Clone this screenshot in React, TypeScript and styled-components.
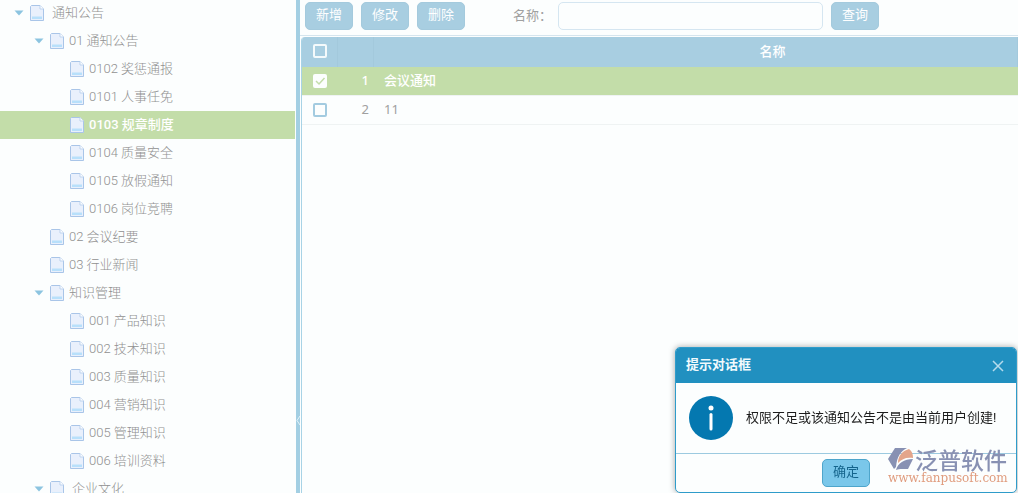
import React from "react";
import styled, { createGlobalStyle, css } from "styled-components";

const GlobalStyle = createGlobalStyle`
  * { box-sizing: border-box; }
  body {
    margin: 0;
    overflow: hidden;
    background: #fcfefe;
    color: #a0a0a0;
    font: 13px/20px Roboto, "Noto Sans CJK SC", sans-serif;
  }
  button, input { font: inherit; }
`;

const Page = styled.div`
  display: flex;
  height: 100vh;
  overflow: hidden;
`;

const Sidebar = styled.nav`
  flex: 0 0 296px;
  padding-right: 1px;
  overflow: hidden;
`;

const Tree = styled.ul`
  list-style: none;
  margin: -1px 0 0;
  padding: 0;
`;

const TreeNode = styled.button<{ $level: number; $selected?: boolean; $gap?: boolean }>`
  display: flex;
  align-items: center;
  width: 100%;
  height: 28px;
  padding: 0 0 0 ${(p) => 10 + p.$level * 20}px;
  border: 0;
  background: ${(p) => (p.$selected ? "#c3dda9" : "transparent")};
  color: ${(p) => (p.$selected ? "#ffffff" : "#909090")};
  font-weight: ${(p) => (p.$selected ? 500 : 300)};
  text-align: left;
  white-space: nowrap;

  span {
    padding: 0 0 1px ${(p) => (p.$gap ? 8 : 5)}px;
  }
`;

const Arrow = styled.svg`
  flex: none;
  width: 20px;
  height: 20px;
`;

const FileGlyph = styled.svg`
  flex: none;
  width: 14px;
  height: 16px;
`;

const Splitter = styled.div`
  position: relative;
  flex: 0 0 4px;
  background: #a3cfe3;
`;

const SplitterHandle = styled.svg`
  position: absolute;
  left: 0;
  top: 415px;
  width: 4px;
  height: 11px;
`;

const Main = styled.main`
  display: flex;
  flex-direction: column;
  flex: 1;
  min-width: 0;
`;

const Toolbar = styled.form`
  display: flex;
  flex: none;
  align-items: flex-start;
  gap: 8px;
  height: 36px;
  padding: 2px 5px 0;
  border-bottom: 1px solid #d5e5ee;
`;

const buttonShape = css`
  width: 48px;
  height: 28px;
  padding: 0 0 2px;
  border-radius: 5px;
`;

const ToolButton = styled.button`
  ${buttonShape}
  flex: none;
  border: 1px solid #a4cadd;
  background: #a8cee1;
  color: #ffffff;
`;

const FieldLabel = styled.label`
  display: flex;
  align-items: center;
  flex: 0 1 310px;
  margin-left: 40px;
  line-height: 26px;
  white-space: nowrap;
`;

const TextField = styled.input`
  flex: 1;
  min-width: 0;
  height: 28px;
  margin-left: 6px;
  padding: 0 8px;
  border: 1px solid #d5e6f1;
  border-radius: 5px;
  background: transparent;
`;

const GridFrame = styled.div`
  flex: 1;
  margin: 1px 0 0 1px;
  border-left: 1px solid #a8d3e6;
  border-top-left-radius: 4px;
  overflow: hidden;
`;

const Grid = styled.table`
  width: 100%;
  border-collapse: separate;
  border-spacing: 0;
  table-layout: fixed;
  font-family: "Noto Sans", "Noto Sans CJK SC", sans-serif;
`;

const CheckColumn = styled.col`
  width: 36px;
`;

const HeadCell = styled.th<{ $name?: boolean }>`
  height: 30px;
  padding: 0 0 2px ${(p) => (p.$name ? 154 : 0)}px;
  border-right: 1px solid #a3c9dc;
  background: #a8cee1;
  color: #ffffff;
  font-weight: 500;
  text-align: center;
`;

const Row = styled.tr<{ $selected?: boolean }>`
  background: ${(p) => (p.$selected ? "#c3dda9" : "transparent")};
  color: ${(p) => (p.$selected ? "#ffffff" : "#a0a0a0")};
  font-weight: ${(p) => (p.$selected ? 500 : 400)};
`;

const Cell = styled.td<{ $align?: string }>`
  height: 29px;
  padding: 0 5px 3px 10px;
  border-bottom: 1px solid #eff3f3;
  text-align: ${(p) => p.$align ?? "left"};
`;

const CheckCell = styled(Cell)`
  padding: 0;
  text-align: center;
`;

const Check = styled.input<{ $light?: boolean }>`
  display: block;
  appearance: none;
  width: 14px;
  height: 14px;
  margin: 0 auto;
  border: 2px solid ${(p) => (p.$light ? "#f4fafc" : "#a3cbe0")};
  border-radius: 2px;

  &:checked {
    border: 0;
    background: #fcfefe;
  }
`;

const CheckWrap = styled.span`
  display: grid;
  justify-content: center;
  align-items: center;

  > * {
    grid-area: 1 / 1;
  }

  svg {
    width: 14px;
    height: 14px;
    pointer-events: none;
  }
`;

const Dialog = styled.section`
  position: fixed;
  right: 1px;
  bottom: 0;
  width: 342px;
  border: 1px solid #2f9cca;
  border-radius: 5px;
  background: #fcfefe;
  box-shadow: 0 0 6px rgba(0, 0, 0, 0.35);
  color: #1c1c1c;
  overflow: hidden;
`;

const DialogHeader = styled.header`
  display: flex;
  align-items: center;
  justify-content: space-between;
  height: 35px;
  padding: 0 12px 0 10px;
  background: #2190c0;
  color: #f2fafd;
`;

const DialogTitle = styled.h2`
  margin: 0;
  padding-bottom: 2px;
  font-size: 13px;
  line-height: 20px;
  font-weight: 700;
`;

const CloseButton = styled.button`
  display: flex;
  padding: 0;
  border: 0;
  background: none;

  svg {
    width: 12px;
    height: 12px;
  }
`;

const DialogBody = styled.div`
  display: flex;
  align-items: center;
  gap: 13px;
  height: 70px;
  padding: 0 13px;

  svg {
    flex: none;
    width: 44px;
    height: 44px;
  }

  p {
    margin: 0;
    white-space: nowrap;
  }
`;

const DialogFooter = styled.footer`
  display: flex;
  justify-content: center;
  height: 39px;
  padding-top: 5px;
  border-top: 1px solid #9ccae0;
`;

const ConfirmButton = styled.button`
  ${buttonShape}
  border: 1px solid #4ea5cb;
  background: #7ac7ea;
  color: #14648c;
`;

const Brand = styled.div`
  position: fixed;
  right: 10px;
  bottom: 8px;
  width: 120px;
  pointer-events: none;
`;

const BrandName = styled.div`
  display: flex;
  align-items: center;
  height: 24px;
  color: #8891b3;
  font: 500 23px/24px "Noto Sans CJK SC", sans-serif;
  white-space: nowrap;

  svg {
    flex: none;
    width: 27px;
    height: 24px;
  }
`;

const BrandUrl = styled.div`
  color: #e09c7e;
  font: 12px/14px "DejaVu Serif", serif;
  white-space: nowrap;
`;

const FileIcon = () => (
  <FileGlyph viewBox="0 0 14 16" aria-hidden="true">
    <path d="M1.5 .5H10l3.5 3.5v11.5h-13V1.5z" fill="#e9f0fc" stroke="#a9c5e8" />
    <path d="M10 .5v3.5h3.5" fill="#fff" stroke="#bdd3ef" />
    <path d="M2 11.5h10v2.5H2z" fill="#b8e0fb" />
  </FileGlyph>
);

type NodeData = { level: number; text: string; open?: boolean; selected?: boolean; gap?: boolean };

const nodes: NodeData[] = [
  { level: 0, text: "通知公告", open: true, gap: true },
  { level: 1, text: "01 通知公告", open: true },
  { level: 2, text: "0102 奖惩通报" },
  { level: 2, text: "0101 人事任免" },
  { level: 2, text: "0103 规章制度", selected: true },
  { level: 2, text: "0104 质量安全" },
  { level: 2, text: "0105 放假通知" },
  { level: 2, text: "0106 岗位竞聘" },
  { level: 1, text: "02 会议纪要" },
  { level: 1, text: "03 行业新闻" },
  { level: 1, text: "知识管理", open: true },
  { level: 2, text: "001 产品知识" },
  { level: 2, text: "002 技术知识" },
  { level: 2, text: "003 质量知识" },
  { level: 2, text: "004 营销知识" },
  { level: 2, text: "005 管理知识" },
  { level: 2, text: "006 培训资料" },
  { level: 1, text: "企业文化", open: true, gap: true },
];

const rows = [
  { id: 1, name: "会议通知", selected: true },
  { id: 2, name: "11", selected: false },
];

export default function App() {
  return (
    <>
      <GlobalStyle />
      <Page>
        <Sidebar>
          <Tree>
            {nodes.map((n) => (
              <li key={n.text}>
                <TreeNode type="button" $level={n.level} $selected={n.selected} $gap={n.gap}>
                  <Arrow viewBox="0 0 20 20" aria-hidden="true">
                    {n.open && <path d="M4.500 7.500h9L9 12.500z" fill="#8cc4e0" />}
                  </Arrow>
                  <FileIcon />
                  <span>{n.text}</span>
                </TreeNode>
              </li>
            ))}
          </Tree>
        </Sidebar>
        <Splitter>
          <SplitterHandle viewBox="0 0 4 11">
            <path d="M4 1L1 5.500L4 10" fill="none" stroke="#e4f3f9" />
          </SplitterHandle>
        </Splitter>
        <Main>
          <Toolbar onSubmit={(e) => e.preventDefault()}>
            <ToolButton type="button">新增</ToolButton>
            <ToolButton type="button">修改</ToolButton>
            <ToolButton type="button">删除</ToolButton>
            <FieldLabel>
              名称：
              <TextField type="text" />
            </FieldLabel>
            <ToolButton type="submit">查询</ToolButton>
          </Toolbar>
          <GridFrame>
            <Grid>
              <colgroup>
                <CheckColumn />
                <CheckColumn />
                <col />
              </colgroup>
              <thead>
                <tr>
                  <HeadCell>
                    <Check type="checkbox" aria-label="全选" $light />
                  </HeadCell>
                  <HeadCell />
                  <HeadCell $name>名称</HeadCell>
                </tr>
              </thead>
              <tbody>
                {rows.map((r) => (
                  <Row key={r.id} $selected={r.selected}>
                    <CheckCell>
                      <CheckWrap>
                        <Check type="checkbox" aria-label={r.name} defaultChecked={r.selected} />
                        {r.selected && (
                          <svg viewBox="0 0 14 14" aria-hidden="true">
                            <path d="M3 7l3 3 5.500-6" fill="none" stroke="#c3dda9" strokeWidth="1.500" />
                          </svg>
                        )}
                      </CheckWrap>
                    </CheckCell>
                    <Cell $align="right">{r.id}</Cell>
                    <Cell>{r.name}</Cell>
                  </Row>
                ))}
              </tbody>
            </Grid>
          </GridFrame>
        </Main>
      </Page>
      <Dialog role="dialog" aria-labelledby="dialog-title">
        <DialogHeader>
          <DialogTitle id="dialog-title">提示对话框</DialogTitle>
          <CloseButton type="button" aria-label="关闭">
            <svg viewBox="0 0 12 12">
              <path d="M1 1l10 10M11 1L1 11" stroke="#b5dbec" strokeWidth="1.500" />
            </svg>
          </CloseButton>
        </DialogHeader>
        <DialogBody>
          <svg viewBox="0 0 44 44" aria-hidden="true">
            <circle cx="22" cy="22" r="22" fill="#0478b0" />
            <circle cx="22" cy="12" r="2.500" fill="#fff" />
            <path d="M22 18.500v14.500" stroke="#fff" strokeWidth="3" strokeLinecap="round" />
          </svg>
          <p>权限不足或该通知公告不是由当前用户创建!</p>
        </DialogBody>
        <DialogFooter>
          <ConfirmButton type="button">确定</ConfirmButton>
        </DialogFooter>
      </Dialog>
      <Brand>
        <BrandName>
          <svg viewBox="0 0 27 24" aria-hidden="true">
            <path d="M7 1h12C13 4 9 9 8 20L6 22 0 12z" fill="#8891b3" />
            <path d="M10 16C10 9 14 4 21 2c3 2 4 5 4 9-7-1-11 1-15 5z" fill="#e3a58b" />
            <path d="M8 23c2-7 8-11 17-11l-5 10h-6c-2 0-4 0-6 1z" fill="#8891b3" />
          </svg>
          泛普软件
        </BrandName>
        <BrandUrl>www.fanpusoft.com</BrandUrl>
      </Brand>
    </>
  );
}
